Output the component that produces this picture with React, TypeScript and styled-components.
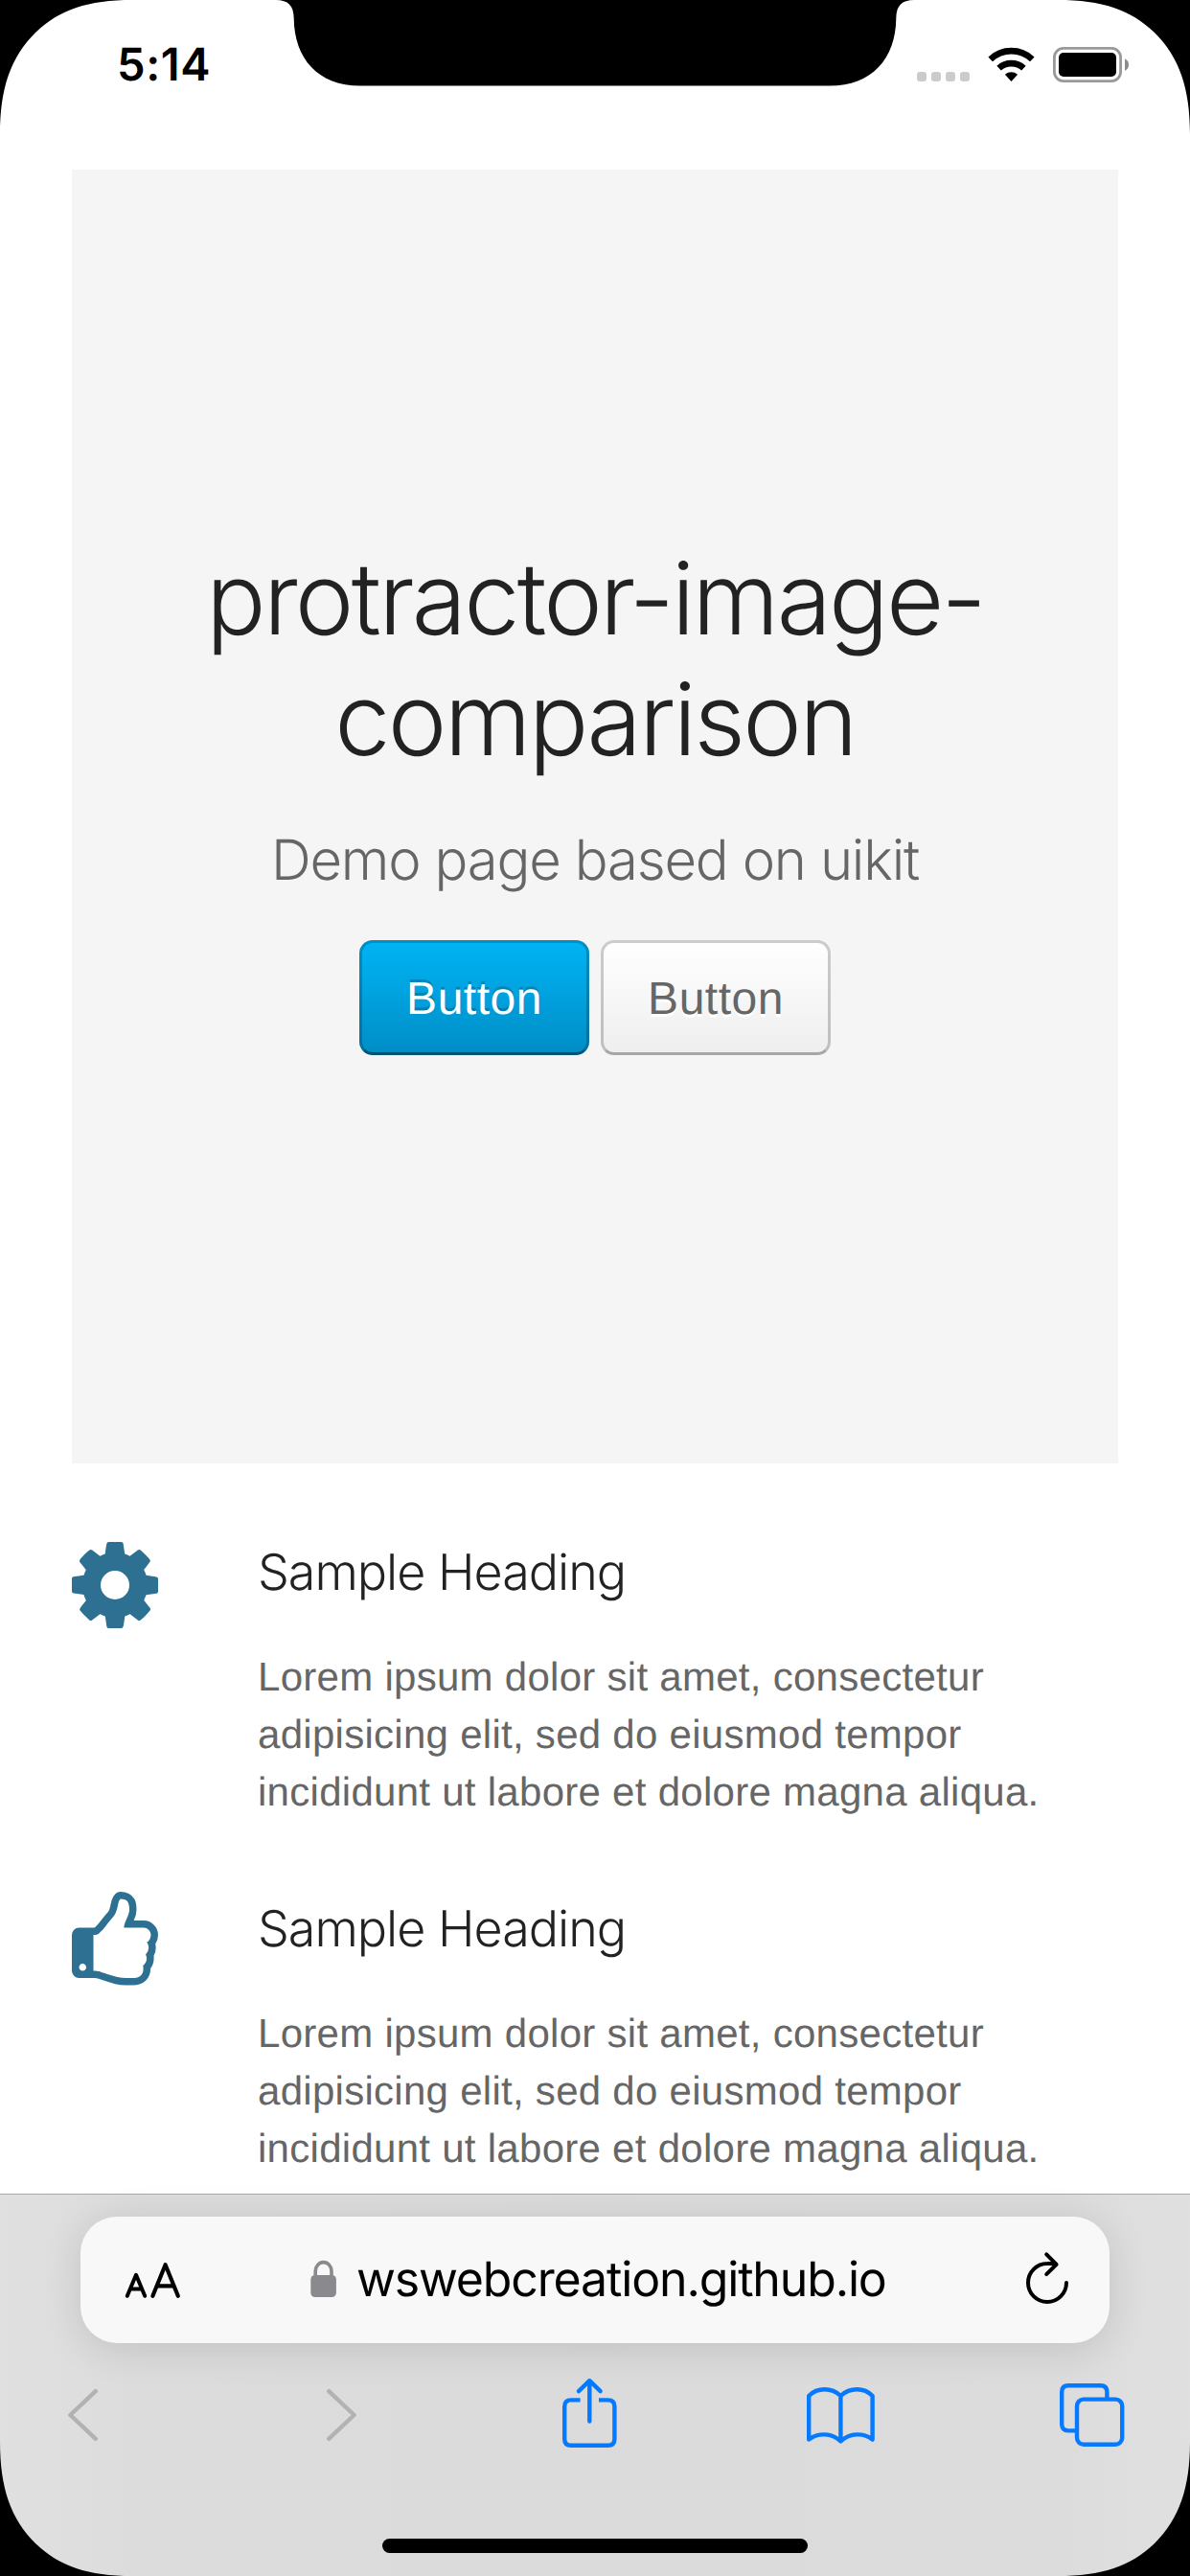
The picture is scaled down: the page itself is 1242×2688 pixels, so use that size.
import React from "react";
import styled, { createGlobalStyle, css } from "styled-components";

const GlobalStyle = createGlobalStyle`
  * { box-sizing: border-box; }
  html, body { margin: 0; padding: 0; background: #fff; text-rendering: geometricPrecision; }
`;

const sans = css`font-family: "Liberation Sans", Arial, sans-serif;`;
const light = css`
  font-family: Inter, "Liberation Sans", sans-serif;
  font-weight: 300;
`;
const system = css`font-family: Inter, "Liberation Sans", sans-serif;`;

const Screen = styled.div`
  position: relative;
  display: flex;
  flex-direction: column;
  width: 1242px;
  height: 2688px;
  overflow: hidden;
  background: #fff;
`;

const Bezel = styled.svg`
  position: absolute;
  inset: 0;
  z-index: 3;
  pointer-events: none;
`;

const StatusBar = styled.header`
  display: flex;
  flex: none;
  justify-content: space-between;
  align-items: flex-start;
  height: 177px;
  padding: 49px 64px 0 122px;
`;

const Clock = styled.time`
  ${system}
  font-size: 47px;
  font-weight: 600;
  line-height: 38px;
  letter-spacing: 0.6px;
`;

const Page = styled.main`
  flex: none;
  height: 2112px;
  padding: 0 75px;
  overflow: hidden;
`;

const Hero = styled.section`
  display: flex;
  flex-direction: column;
  align-items: center;
  height: 1350px;
  padding-top: 385px;
  background: #f5f5f5;
  text-align: center;
`;

const Title = styled.h1`
  ${light}
  margin: 0;
  color: #222;
  font-size: 104px;
  line-height: 126px;
  letter-spacing: -2.7px;
`;

const Lead = styled.p`
  ${light}
  margin: 38px 0 0;
  color: #666;
  font-size: 58px;
  line-height: 90px;
  letter-spacing: -1.2px;
`;

const ButtonGroup = styled.div`
  display: flex;
  gap: 12px;
  margin-top: 39px;
`;

const Button = styled.button<{ $primary?: boolean }>`
  ${sans}
  width: 240px;
  height: 120px;
  padding: 3px 0 0;
  border: 3px solid;
  border-radius: 14px;
  font-size: 48px;
  line-height: 1;
  letter-spacing: 0.5px;
  text-rendering: inherit;
  ${({ $primary }) =>
    $primary
      ? css`
          color: #fff;
          border-color: rgba(0, 0, 0, 0.2);
          border-bottom-color: rgba(0, 0, 0, 0.4);
          background: linear-gradient(#00b4f5, #008dc5) border-box;
          text-shadow: 0 -3px 0 rgba(0, 0, 0, 0.2);
        `
      : css`
          color: #666;
          border-color: rgba(0, 0, 0, 0.2);
          border-bottom-color: rgba(0, 0, 0, 0.3);
          background: linear-gradient(#fff, #eee) border-box;
          text-shadow: 0 3px 0 #fff;
        `}
`;

const Features = styled.div`
  display: flex;
  flex-direction: column;
  padding-top: 75px;
`;

const Feature = styled.article`
  display: grid;
  grid-template-columns: 90px 1fr;
  column-gap: 105px;
  height: 372px;
`;

const FeatureIcon = styled.svg<{ $top: number }>`
  display: block;
  width: 90px;
  margin-top: ${({ $top }) => $top}px;
  overflow: visible;
  fill: #2d7091;
`;

const FeatureTitle = styled.h2`
  ${light}
  margin: 6px 0 0 -1px;
  color: #222;
  font-size: 52px;
  line-height: 66px;
  letter-spacing: -1px;
`;

const FeatureText = styled.p`
  ${sans}
  margin: 46px 0 0 -1px;
  color: #666;
  font-size: 42px;
  line-height: 60px;
  letter-spacing: 0.28px;
  white-space: nowrap;
`;

const BrowserBar = styled.footer`
  flex: none;
  display: flex;
  flex-direction: column;
  height: 399px;
  border-top: 1px solid #a9a9ae;
  background: linear-gradient(90deg, #e0e0e0 0, #dcdcdc 140px, #dbdbdb 50%, #dcdcdc 1110px, #e0e0e0 100%);
`;

const AddressField = styled.div`
  display: grid;
  grid-template-columns: 240px 1fr 44px;
  align-items: start;
  height: 132px;
  margin: 23px 84px 0;
  padding: 0 44px 0 0;
  border-radius: 38px;
  background: #f8f8f8;
  box-shadow: 0 6px 42px rgba(0, 0, 0, 0.12);
`;

const ReaderGlyph = styled.svg`
  margin: 46px 0 0 45px;
`;

const Address = styled.div`
  ${system}
  display: flex;
  height: 132px;
  font-size: 50px;
  line-height: 133px;
  letter-spacing: -1.15px;
  white-space: nowrap;
`;

const Lock = styled.svg`
  flex: none;
  margin: 45px 20px 0 0;
`;

const Reload = styled.svg`
  margin-top: 36px;
`;

const Toolbar = styled.nav`
  display: grid;
  grid-template-columns: 270px 246px 255px 264px 67px;
  align-items: start;
  height: 80px;
  margin-top: 33px;
  padding-left: 71px;
`;

const ToolIcon = styled.svg<{ $muted?: boolean; $top: number }>`
  display: block;
  margin-top: ${({ $top }) => $top}px;
  fill: none;
  stroke: ${({ $muted }) => ($muted ? "#b2b2b2" : "#067aff")};
  stroke-width: 4.4;
  stroke-linecap: round;
  stroke-linejoin: round;
`;

const HomeIndicator = styled.div`
  width: 444px;
  height: 15px;
  margin: 91px auto 0;
  border-radius: 8px;
  background: #000;
`;

const cogPath =
  "M1152 896q0-106-75-181t-181-75-181 75-75 181 75 181 181 75 181-75 75-181zm512-109v222q0 12-8 23t-20 13l-185 28q-19 54-39 91 35 50 107 138 10 12 10 25t-9 23q-27 37-99 108t-94 71q-12 0-26-9l-138-108q-44 23-91 38-16 136-29 186-7 28-36 28h-222q-14 0-24.5-8.5t-11.5-21.5l-28-184q-49-16-90-37l-141 107q-10 9-25 9-14 0-25-11-126-114-165-168-7-10-7-23 0-12 8-23 15-21 51-66.5t54-70.5q-27-50-41-99l-183-27q-13-2-21-12.5t-8-23.5v-222q0-12 8-23t19-13l186-28q14-46 39-92-40-57-107-138-10-12-10-24 0-10 9-23 26-36 98.5-107.5t94.5-71.5q13 0 26 10l138 107q44-23 91-38 16-136 29-186 7-28 36-28h222q14 0 24.5 8.5t11.5 21.5l28 184q49 16 90 37l142-107q9-9 24-9 13 0 25 10 129 119 165 170 7 8 7 22 0 12-8 23-15 21-51 66.5t-54 70.5q26 50 41 98l183 28q13 2 21 12.5t8 23.5z";

const thumbPath =
  "M384 1344q0-26-19-45t-45-19-45 19-19 45 19 45 45 19 45-19 19-45zm1152-576q0-51-39-89.5t-89-38.5h-352q0-58 48-159.5t48-160.5q0-98-32-145t-128-47q-26 26-38 85t-30.5 125.5-59.5 109.5q-22 23-77 91-4 5-23 30t-31.5 41-34.5 42.5-40 44-38.5 35.5-40 27-35.5 9h-32v640h32q13 0 31.5 3t33 6.5 38 11 35 11.5 35.5 12.5 29 10.5q211 73 342 73h121q192 0 192-167 0-26-5-56 30-16 47.5-52.5t17.5-73.5-18-69q53-50 53-119 0-25-10-55.5t-25-47.5q32-1 53.5-47t21.5-81zm128-1q0 89-49 163 9 33 9 69 0 77-38 144 3 21 3 43 0 101-60 178 1 139-85 219.5t-227 80.5h-129q-96 0-189.5-22.5t-216.5-65.5q-116-40-138-40h-288q-53 0-90.5-37.5t-37.5-90.5v-640q0-53 37.5-90.5t90.5-37.5h274q36-24 137-155 58-75 107-128 24-25 35.5-85.5t30.5-126.5 62-108q39-37 90-37 84 0 151 32.5t102 101.5 35 186q0 93-48 192h176q104 0 180 76t76 179z";

const features = [
  { path: cogPath, viewBox: "128 128 1536 1536", height: 90, top: 7 },
  { path: thumbPath, viewBox: "128 0 1536 1672", height: 98, top: 0 },
];

const cornerPath = "M0 0H138C92 0 62 10 37 34C11 60 0 92 0 140Z";

const PhoneFrame = () => (
  <Bezel width="1242" height="2688" viewBox="0 0 1242 2688">
    <path d={cornerPath} />
    <path d={cornerPath} transform="translate(1242 0) scale(-1 1)" />
    <path d={cornerPath} transform="translate(0 2688) scale(1 -1)" />
    <path d={cornerPath} transform="translate(1242 2688) scale(-1 -1)" />
    <path d="M288 0C301 0 306.5 6 306.7 19C307 61 332 89.6 376 89.6H866C910 89.6 935 61 935.3 19C935.5 6 941 0 954 0Z" />
  </Bezel>
);

const StatusIcons = () => (
  <svg width="221" height="40" viewBox="957 49 221 40">
    {[957, 972, 987, 1002].map((x) => (
      <rect key={x} x={x} y="75" width="10" height="10" rx="3.2" fill="#cbcbcb" />
    ))}
    <path d="M1055.5 85l-6.6-7.3a10.4 10.4 0 0 1 13.2 0z" />
    <g fill="none" stroke="#000" strokeWidth="6.6">
      <path d="M1042.6 71.2a19 19 0 0 1 25.8 0" />
      <path d="M1033.7 61.8a31.6 31.6 0 0 1 43.6 0" />
    </g>
    <rect x="1100.4" y="50.4" width="69.2" height="34.2" rx="9.5" fill="none" stroke="#999" strokeWidth="2.8" />
    <rect x="1105" y="55" width="60" height="25" rx="5" />
    <path d="M1174 61.2q4 2 4 6.3t-4 6.3z" fill="#8c8c8c" />
  </svg>
);

export default function App() {
  return (
    <>
      <GlobalStyle />
      <Screen>
        <PhoneFrame />
        <StatusBar>
          <Clock>5:14</Clock>
          <StatusIcons />
        </StatusBar>
        <Page>
          <Hero>
            <Title>
              protractor-image-
              <br />
              comparison
            </Title>
            <Lead>Demo page based on uikit</Lead>
            <ButtonGroup>
              <Button $primary>Button</Button>
              <Button>Button</Button>
            </ButtonGroup>
          </Hero>
          <Features>
            {features.map((f) => (
              <Feature key={f.viewBox}>
                <FeatureIcon viewBox={f.viewBox} height={f.height} $top={f.top}>
                  <path d={f.path} />
                </FeatureIcon>
                <div>
                  <FeatureTitle>Sample Heading</FeatureTitle>
                  <FeatureText>
                    Lorem ipsum dolor sit amet, consectetur
                    <br />
                    adipisicing elit, sed do eiusmod tempor
                    <br />
                    incididunt ut labore et dolore magna aliqua.
                  </FeatureText>
                </div>
              </Feature>
            ))}
          </Features>
        </Page>
        <BrowserBar>
          <AddressField>
            <ReaderGlyph width="62" height="42" viewBox="129 2359 62 42" fill="none" stroke="#000" strokeLinecap="round" strokeLinejoin="round">
              <path strokeWidth="4" d="M132.8 2395.8L142 2373.8L151.2 2395.8M136.2 2388.4H147.8" />
              <path strokeWidth="4.2" d="M159.4 2395.8L172.6 2363.2L185.8 2395.8M164.4 2385.4H180.8" />
            </ReaderGlyph>
            <Address>
              <Lock width="28" height="42" viewBox="0 0 28 42">
                <rect x="0.3" y="16" width="26.6" height="23" rx="4.5" fill="#8a8a8e" />
                <path d="M5.2 18V12a8.4 9.4 0 0 1 16.8 0V18" fill="none" stroke="#8a8a8e" strokeWidth="3.6" />
              </Lock>
              wswebcreation.github.io
            </Address>
            <Reload width="46" height="58" viewBox="1069 2349 46 58" fill="none" stroke="#000" strokeWidth="4" strokeLinecap="round" strokeLinejoin="round">
              <path d="M1112 2382A20 20 0 1 1 1092 2362Q1097 2361.6 1101 2362.6" />
              <path d="M1091.2 2352.4L1101.6 2362.8L1091.2 2373.2" />
            </Reload>
          </AddressField>
          <Toolbar>
            <ToolIcon $muted $top={14} width="32" height="56" viewBox="71 2492 32 56">
              <path d="M99.8 2495.2L73.4 2520L99.8 2544.8" />
            </ToolIcon>
            <ToolIcon $muted $top={14} width="32" height="56" viewBox="341 2492 32 56">
              <path d="M343.2 2495.2L369.6 2520L343.2 2544.8" />
            </ToolIcon>
            <ToolIcon $top={3} width="57" height="74" viewBox="587 2481 57 74">
              <path strokeLinecap="butt" d="M605.6 2504.4H596Q589.2 2504.4 589.2 2511.2V2545Q589.2 2551.8 596 2551.8H634.6Q641.4 2551.8 641.4 2545V2511.2Q641.4 2504.4 634.6 2504.4H625" />
              <path d="M615.3 2526.6V2484.4M604 2495.2L615.3 2484.2L626.6 2495.2" />
            </ToolIcon>
            <ToolIcon $top={12} width="72" height="62" viewBox="842 2490 72 62">
              <path d="M877.4 2500C868 2491 853 2491 844.2 2500V2545.6C853 2538.4 868 2538.4 877.4 2547.4C887 2538.4 902 2538.4 910.6 2545.6V2500C902 2491 887 2491 877.4 2500ZV2547" />
            </ToolIcon>
            <ToolIcon $top={8} width="68" height="68" viewBox="1106 2486 68 68">
              <path strokeLinecap="butt" d="M1122 2536.4H1115Q1108.2 2536.4 1108.2 2529.6V2496Q1108.2 2489.2 1115 2489.2H1148.6Q1155.4 2489.2 1155.4 2496V2503" />
              <rect x="1124" y="2503.6" width="47.2" height="47.2" rx="7" />
            </ToolIcon>
          </Toolbar>
          <HomeIndicator />
        </BrowserBar>
      </Screen>
    </>
  );
}
